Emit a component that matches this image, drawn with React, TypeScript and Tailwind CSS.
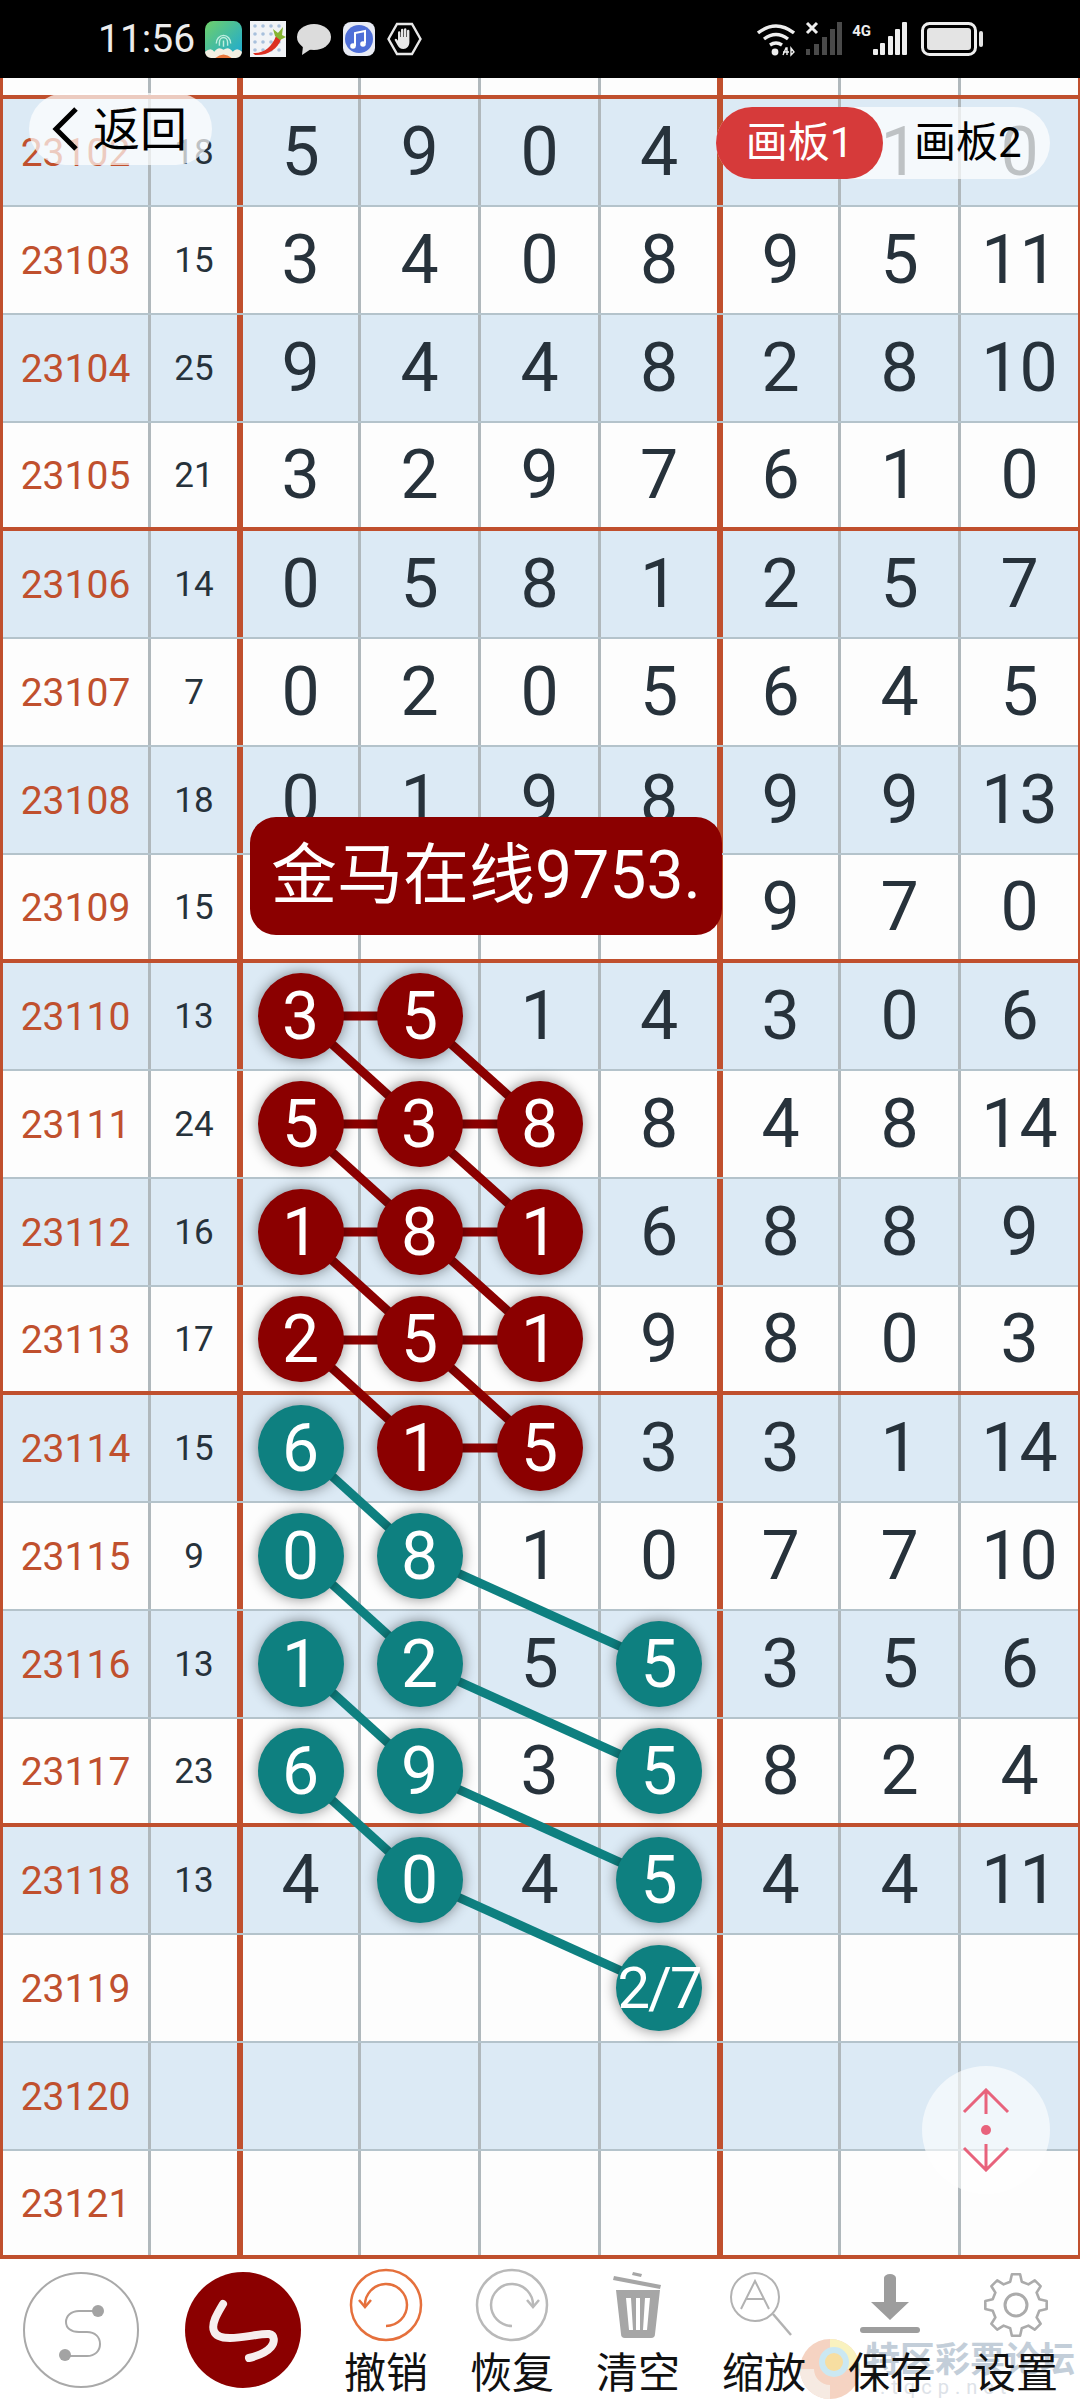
import React from "react"

type Mark = { col: number; tone: "red" | "teal"; label?: string }

const rows: { id: number; sum: string; cells: string[]; marks?: Mark[] }[] = [
  { id: 23102, sum: "18", cells: ["5", "9", "0", "4", "7", "1", "0"] },
  { id: 23103, sum: "15", cells: ["3", "4", "0", "8", "9", "5", "11"] },
  { id: 23104, sum: "25", cells: ["9", "4", "4", "8", "2", "8", "10"] },
  { id: 23105, sum: "21", cells: ["3", "2", "9", "7", "6", "1", "0"] },
  { id: 23106, sum: "14", cells: ["0", "5", "8", "1", "2", "5", "7"] },
  { id: 23107, sum: "7", cells: ["0", "2", "0", "5", "6", "4", "5"] },
  { id: 23108, sum: "18", cells: ["0", "1", "9", "8", "9", "9", "13"] },
  { id: 23109, sum: "15", cells: ["1", "7", "2", "5", "9", "7", "0"] },
  { id: 23110, sum: "13", cells: ["3", "5", "1", "4", "3", "0", "6"], marks: [{ col: 0, tone: "red" }, { col: 1, tone: "red" }] },
  { id: 23111, sum: "24", cells: ["5", "3", "8", "8", "4", "8", "14"], marks: [{ col: 0, tone: "red" }, { col: 1, tone: "red" }, { col: 2, tone: "red" }] },
  { id: 23112, sum: "16", cells: ["1", "8", "1", "6", "8", "8", "9"], marks: [{ col: 0, tone: "red" }, { col: 1, tone: "red" }, { col: 2, tone: "red" }] },
  { id: 23113, sum: "17", cells: ["2", "5", "1", "9", "8", "0", "3"], marks: [{ col: 0, tone: "red" }, { col: 1, tone: "red" }, { col: 2, tone: "red" }] },
  { id: 23114, sum: "15", cells: ["6", "1", "5", "3", "3", "1", "14"], marks: [{ col: 0, tone: "teal" }, { col: 1, tone: "red" }, { col: 2, tone: "red" }] },
  { id: 23115, sum: "9", cells: ["0", "8", "1", "0", "7", "7", "10"], marks: [{ col: 0, tone: "teal" }, { col: 1, tone: "teal" }] },
  { id: 23116, sum: "13", cells: ["1", "2", "5", "5", "3", "5", "6"], marks: [{ col: 0, tone: "teal" }, { col: 1, tone: "teal" }, { col: 3, tone: "teal" }] },
  { id: 23117, sum: "23", cells: ["6", "9", "3", "5", "8", "2", "4"], marks: [{ col: 0, tone: "teal" }, { col: 1, tone: "teal" }, { col: 3, tone: "teal" }] },
  { id: 23118, sum: "13", cells: ["4", "0", "4", "5", "4", "4", "11"], marks: [{ col: 1, tone: "teal" }, { col: 3, tone: "teal" }] },
  { id: 23119, sum: "", cells: ["", "", "", "2/7", "", "", ""], marks: [{ col: 3, tone: "teal" }] },
  { id: 23120, sum: "", cells: ["", "", "", "", "", "", ""] },
  { id: 23121, sum: "", cells: ["", "", "", "", "", "", ""] },
]

const colX = [301, 420, 540, 659]
const rowY = (id: number) => 152 + (id - 23102) * 108

const redLinks: [number, number, number, number][] = [
  [23110, 0, 23110, 1],
  [23111, 0, 23111, 2],
  [23112, 0, 23112, 2],
  [23113, 0, 23113, 2],
  [23114, 1, 23114, 2],
  [23110, 0, 23111, 1],
  [23110, 1, 23111, 2],
  [23111, 0, 23112, 1],
  [23111, 1, 23112, 2],
  [23112, 0, 23113, 1],
  [23112, 1, 23113, 2],
  [23113, 0, 23114, 1],
  [23113, 1, 23114, 2],
]

const tealLinks: [number, number, number, number][] = [
  [23114, 0, 23115, 1],
  [23115, 0, 23116, 1],
  [23116, 0, 23117, 1],
  [23117, 0, 23118, 1],
  [23115, 1, 23116, 3],
  [23116, 1, 23117, 3],
  [23117, 1, 23118, 3],
  [23118, 1, 23119, 3],
]

const cellWidths = ["w-[118px]", "w-[120px]", "w-[120px]", "w-[122px]", "w-[118px]", "w-[120px]", "w-[117px]"]

// 8 squat teeth, same outline as the settings gear in the toolbar
function gearPath(cx: number, cy: number, outer: number, inner: number) {
  const pts: string[] = []
  for (let i = 0; i < 8; i++) {
    const a = (i * Math.PI) / 4 - Math.PI / 2
    const step = Math.PI / 8
    const add = (r: number, t: number) => pts.push(`${(cx + r * Math.cos(t)).toFixed(1)} ${(cy + r * Math.sin(t)).toFixed(1)}`)
    add(inner, a - step * 0.62)
    add(outer, a - step * 0.34)
    add(outer, a + step * 0.34)
    add(inner, a + step * 0.62)
  }
  return `M${pts.join("L")}Z`
}

function Lines() {
  const draw = (links: [number, number, number, number][], color: string) =>
    links.map(([r1, c1, r2, c2]) => (
      <line
        key={`${r1}-${c1}-${r2}-${c2}`}
        x1={colX[c1]}
        y1={rowY(r1)}
        x2={colX[c2]}
        y2={rowY(r2)}
        stroke={color}
        strokeWidth={9}
      />
    ))
  return (
    <svg className="absolute top-0 left-0 z-10" width={1080} height={2260} viewBox="0 0 1080 2260">
      {draw(redLinks, "#8b0000")}
      {draw(tealLinks, "#0e8080")}
    </svg>
  )
}

function Row({ id, sum, cells, marks }: (typeof rows)[number]) {
  const shaded = id % 2 === 0
  const thick = (id - 23101) % 4 === 0
  return (
    <div className={`flex h-[108px] ${thick ? "border-b-4 border-[#c0502e]" : "border-b-2 border-[#b4c3cb]"} ${shaded ? "bg-[#dceaf5]" : "bg-[#fdfdfd]"}`}>
      <div className="w-[148px] pt-[3px] flex items-center justify-center border-r-[3px] border-[#b0b8bc] text-[39px] text-[#c0502e]">{id}</div>
      <div className="w-[92px] pt-[3px] flex items-center justify-center border-r-[6px] border-[#c0502e] text-[35px] text-[#27323b]">{sum}</div>
      {cells.map((value, i) => {
        const mark = marks?.find((m) => m.col === i)
        return (
          <div
            key={i}
            className={`${cellWidths[i]} flex items-center justify-center text-[68px] text-[#27323b] ${i === 3 ? "border-r-[6px] border-[#c0502e]" : i === 6 ? "" : "border-r-[3px] border-[#b0b8bc]"}`}
          >
            {mark ? (
              <div
                className={`relative z-20 w-[86px] h-[86px] shrink-0 rounded-full flex items-center justify-center text-white shadow-[0_0_14px_rgba(0,0,0,0.45)] ${mark.tone === "red" ? "bg-[#8b0000]" : "bg-[#0e8080]"} ${value.length > 1 ? "text-[58px] tracking-[-2px]" : "text-[66px]"}`}
              >
                {value}
              </div>
            ) : (
              value
            )}
          </div>
        )
      })}
    </div>
  )
}

function HeaderStub() {
  return (
    <div className="flex h-[21px] border-b-4 border-[#c0502e] bg-[#fdfdfd]">
      <div className="w-[148px] border-r-[3px] border-[#b0b8bc]" />
      <div className="w-[92px] border-r-[6px] border-[#c0502e]" />
      {cellWidths.map((w, i) => (
        <div key={i} className={`${w} ${i === 3 ? "border-r-[6px] border-[#c0502e]" : i === 6 ? "" : "border-r-[3px] border-[#b0b8bc]"}`} />
      ))}
    </div>
  )
}

function StatusBar() {
  return (
    <div className="h-[78px] bg-black flex items-center text-white">
      <span className="ml-[98px] w-[95px] text-[39px] leading-none text-[#ececec]">11:56</span>
      <div className="ml-[12px] flex items-center">
        {/* app icons */}
        <svg width="37" height="37" viewBox="0 0 36 36">
          <defs>
            <linearGradient id="app1" x1="0" y1="0" x2="1" y2="1">
              <stop offset="0" stopColor="#6fd06a" />
              <stop offset="1" stopColor="#1aa8d8" />
            </linearGradient>
          </defs>
          <rect width="36" height="36" rx="8" fill="url(#app1)" />
          <path d="M11 22a7 8 0 0 1 14 0M14 24v-3a4 5 0 0 1 8 0v3M18 19v6" fill="none" stroke="#bfeee0" strokeWidth="1.4" />
          <path d="M0 30q6-5 9 0q4-6 9-2q5-4 9 2q4-5 9 0v0a6 6 0 0 1-6 6H6a6 6 0 0 1-6-6z" fill="#f2efe2" />
          <path d="M10 36q8-7 16 0z" fill="#e8763a" />
        </svg>
        <svg className="ml-[8px]" width="36" height="36" viewBox="0 0 36 36">
          <rect width="36" height="36" fill="#f1f3f6" />
          {[5, 13, 21, 29].map((x) =>
            [5, 13, 21, 29].map((y) => <circle key={`${x}-${y}`} cx={x} cy={y} r="1.8" fill="#a8c0dc" />)
          )}
          <path d="M3 32c10 1 19-6 23-17l5 3c-3 10-14 17-26 16z" fill="#dc2f22" />
          <path d="M25 15l-2-7 5 4 5-6-1 8 4 2-6 3z" fill="#86b532" />
        </svg>
        <svg className="ml-[11px]" width="34" height="34" viewBox="0 0 34 34">
          <ellipse cx="17" cy="15" rx="17" ry="13" fill="#dcdcdc" />
          <path d="M6 24l-1 9 9-6z" fill="#dcdcdc" />
        </svg>
        <svg className="ml-[12px]" width="32" height="34" viewBox="0 0 32 34">
          <rect width="32" height="34" rx="8" fill="#e8ebf4" />
          <circle cx="16" cy="17" r="14" fill="#4f6fd8" />
          <path d="M12 24V11l10-2v12" fill="none" stroke="#fff" strokeWidth="2" />
          <circle cx="10" cy="24" r="2.8" fill="#fff" />
          <circle cx="20" cy="22" r="2.8" fill="#fff" />
        </svg>
        <svg className="ml-[12px]" width="35" height="34" viewBox="0 0 35 34">
          <path d="M10 2h15l8.500 15-8.500 15H10L1.500 17z" fill="none" stroke="#e8e8e8" strokeWidth="2.4" />
          <path d="M11 10.500a1.200 1.200 0 0 1 2.400 0V15h.6V8a1.200 1.200 0 0 1 2.400 0v7h.6V7.500a1.200 1.200 0 0 1 2.400 0V15h.6V9a1.200 1.200 0 0 1 2.400 0v11c0 4-2.500 7-6 7c-3 0-4.500-1.500-6-4l-2.500-4.500c-.8-1.500 1-2.500 2-1.200l1.100 1.500z" fill="#e8e8e8" />
        </svg>
      </div>
      <div className="ml-auto mr-[97px] flex items-center">
        {/* signal and battery */}
        <svg width="38" height="36" viewBox="0 0 38 36">
          <path d="M1 12q18-14 36 0" fill="none" stroke="#eee" strokeWidth="3.4" />
          <path d="M7 18q12-9 24 0" fill="none" stroke="#eee" strokeWidth="3.4" />
          <path d="M13 24q6-4 12 0" fill="none" stroke="#eee" strokeWidth="3.4" />
          <circle cx="18" cy="31" r="3.4" fill="#eee" />
          <path d="M26 34l3-7h1v7M26 31h6M34 27v7l3-3z" fill="none" stroke="#eee" strokeWidth="1.4" />
        </svg>
        <svg className="ml-[10px]" width="38" height="36" viewBox="0 0 38 36">
          <path d="M2 2l10 10M12 2L2 12" stroke="#eee" strokeWidth="3" />
          <rect x="1" y="28" width="4" height="6" fill="#4a4a4a" />
          <rect x="9" y="23" width="5" height="11" fill="#4a4a4a" />
          <rect x="17" y="16" width="5" height="18" fill="#4a4a4a" />
          <rect x="25" y="8" width="5" height="26" fill="#4a4a4a" />
          <rect x="32" y="1" width="5" height="33" fill="#4a4a4a" />
        </svg>
        <span className="ml-[9px] mb-[16px] text-[15px] font-bold leading-none text-[#eee]">4G</span>
        <svg className="ml-[2px]" width="34" height="36" viewBox="0 0 34 36">
          <rect x="0" y="28" width="5" height="6" rx="1" fill="#eee" />
          <rect x="7" y="22" width="5" height="12" rx="1" fill="#eee" />
          <rect x="15" y="15" width="5" height="19" rx="1" fill="#eee" />
          <rect x="22" y="8" width="5" height="26" rx="1" fill="#eee" />
          <rect x="29" y="1" width="5" height="33" rx="1" fill="#eee" />
        </svg>
        <svg className="ml-[14px]" width="62" height="34" viewBox="0 0 62 34">
          <rect x="1.5" y="1.5" width="53" height="31" rx="7" fill="none" stroke="#eee" strokeWidth="3" />
          <rect x="6" y="6" width="44" height="22" rx="3" fill="#e4e4e4" />
          <rect x="58" y="9" width="4" height="16" rx="2" fill="#e4e4e4" />
        </svg>
      </div>
    </div>
  )
}

function ToolItem({ label, children }: { label: string; children: React.ReactNode }) {
  return (
    <div className="w-[126px] flex flex-col items-center">
      <div className="h-[84px] flex items-center justify-center">{children}</div>
      <span className="mt-[5px] text-[42px] leading-[44px] text-[#111]">{label}</span>
    </div>
  )
}

function BottomBar() {
  return (
    <div className="relative h-[141px] bg-white flex items-start">
      {/* watermark */}
      <svg className="absolute left-[798px] top-[76px] opacity-80" width="64" height="65" viewBox="0 0 64 65">
        <circle cx="32" cy="34" r="30" fill="#f3c9b4" />
        <path d="M32 4a30 30 0 0 1 30 30H44a12 12 0 0 0-12-12z" fill="#f8efb0" />
        <path d="M2 34a30 30 0 0 0 30 30V50A16 16 0 0 1 16 34z" fill="#f4e6dc" />
        <circle cx="36" cy="27" r="15" fill="#bfe3f0" />
        <circle cx="36" cy="27" r="9" fill="#f6d68a" />
      </svg>
      <div className="absolute left-[865px] top-[84px] whitespace-nowrap text-[35px] leading-[36px] font-bold text-[#c3ced9]">特区彩票论坛</div>
      <div className="absolute left-[880px] top-[118px] whitespace-nowrap text-[20px] leading-[20px] tracking-[6px] text-[#dde2e8]">.tqcp.net</div>

      <svg className="relative ml-[23px] mt-[13px]" width="116" height="116" viewBox="0 0 116 116">
        <circle cx="58" cy="58" r="57" fill="none" stroke="#a9a9a9" strokeWidth="2" />
        <path d="M75 39H56c-8 0-13 5-13 11s5 10 13 10h8c8 0 13 5 13 12s-5 12-13 12H43" fill="none" stroke="#a9a9a9" strokeWidth="2" />
        <circle cx="75" cy="39" r="6" fill="#a3a3a3" />
        <circle cx="42" cy="83" r="6" fill="#a3a3a3" />
      </svg>
      <svg className="relative ml-[46px] mt-[13px]" width="116" height="116" viewBox="0 0 116 116">
        <circle cx="58" cy="58" r="58" fill="#8b0000" />
        <path d="M38 32c-6 10-12 20-9 27c2 6 10 7 16 7c14 0 32-5 39-4c6 1 6 8 2 13c-5 6-14 9-22 11" fill="none" stroke="#f6eeee" strokeWidth="8" strokeLinecap="round" />
      </svg>
      <div className="relative flex ml-[22px] mt-[4px]">
        <ToolItem label="撤销">
          <svg width="74" height="74" viewBox="0 0 74 74" fill="none" stroke="#e5703c" strokeWidth="2.5">
            <circle cx="37" cy="37" r="35" />
            <path d="M37 58a21 21 0 1 0 -21 -20" />
            <path d="M10 32l6 7 6-7" />
          </svg>
        </ToolItem>
        <ToolItem label="恢复">
          <svg width="74" height="74" viewBox="0 0 74 74" fill="none" stroke="#b9b9b9" strokeWidth="2.5">
            <circle cx="37" cy="37" r="35" />
            <path d="M37 58a21 21 0 1 1 21 -20" />
            <path d="M52 32l6 7 6-7" />
          </svg>
        </ToolItem>
        <ToolItem label="清空">
          <svg width="50" height="66" viewBox="0 0 50 66" fill="#a6a6a6">
            <path d="M1 4l47 9-1 4L0 8z" />
            <path d="M19 3l9 2 1-3-9-2z" />
            <path d="M3 18h44l-5 44a4 4 0 0 1-4 4H12a4 4 0 0 1-4-4zM13 26l3 32h4l-2-32zM23 26v32h4V26zM32 26l-2 32h4l3-32z" fillRule="evenodd" />
          </svg>
        </ToolItem>
        <ToolItem label="缩放">
          <svg className="ml-[-6px]" width="62" height="66" viewBox="0 0 62 66" fill="none" stroke="#b2b2b2" strokeWidth="2">
            <circle cx="25" cy="25" r="24" />
            <path d="M11 37L25 9l14 28M16 27h18" />
            <path d="M43 42l18 21" strokeWidth="2.5" />
          </svg>
        </ToolItem>
        <ToolItem label="保存">
          <svg width="60" height="62" viewBox="0 0 60 62" fill="#9d9d9d">
            <path d="M24 4a6 4 0 0 1 12 0v24h13L30 46 11 28h13z" />
            <rect y="53" width="60" height="6" rx="3" />
          </svg>
        </ToolItem>
        <ToolItem label="设置">
          <svg width="66" height="66" viewBox="0 0 66 66" fill="none" stroke="#ababab" strokeWidth="2.6" strokeLinejoin="round">
            <circle cx="33" cy="33" r="11" strokeWidth="3" />
            <path d={gearPath(33, 33, 31, 24)} />
          </svg>
        </ToolItem>
      </div>
    </div>
  )
}

export default function App() {
  return (
    <div className="relative w-[1080px] h-[2400px] overflow-hidden bg-white font-['Roboto','Noto_Sans_CJK_SC',sans-serif]">
      <StatusBar />
      <div className="border-l-[3px] border-r-2 border-l-[#c0502e] border-r-[#c0502e]">
        <HeaderStub />
        {rows.map((row) => (
          <Row key={row.id} {...row} />
        ))}
      </div>
      <Lines />

      {/* floating controls */}
      <div className="absolute z-30 left-[29px] top-[93px] w-[183px] h-[72px] rounded-[36px] bg-white/70 flex items-center pl-[23px] text-[47px] leading-none text-black">
        <svg className="mr-[15px]" width="26" height="44" viewBox="0 0 26 44" fill="none" stroke="#000" strokeWidth="5">
          <path d="M24 2L4 22l20 20" />
        </svg>
        返回
      </div>
      <div className="absolute z-30 left-[716px] top-[107px] w-[334px] h-[72px] rounded-[36px] bg-white/70 flex items-center text-[42px] leading-none">
        <div className="w-[167px] h-full rounded-[36px] bg-[#d63a3a] text-white flex items-center justify-center">画板1</div>
        <div className="ml-[31px] text-black">画板2</div>
      </div>
      <div className="absolute z-30 left-[250px] top-[817px] w-[472px] h-[118px] rounded-[26px] bg-[#8b0000] text-white text-[66px] leading-none flex items-center justify-center whitespace-nowrap">
        金马在线9753.
      </div>
      <div className="absolute z-30 left-[922px] top-[2066px] w-[128px] h-[128px] rounded-full bg-white/60 flex items-center justify-center">
        <svg width="48" height="84" viewBox="0 0 48 84" fill="none" stroke="#e8637c" strokeWidth="3">
          <path d="M2 24L24 2l22 22M24 2v24" />
          <circle cx="24" cy="42" r="5" fill="#e8637c" stroke="none" />
          <path d="M2 60l22 22 22-22M24 82V56" />
        </svg>
      </div>

      <BottomBar />
    </div>
  )
}
